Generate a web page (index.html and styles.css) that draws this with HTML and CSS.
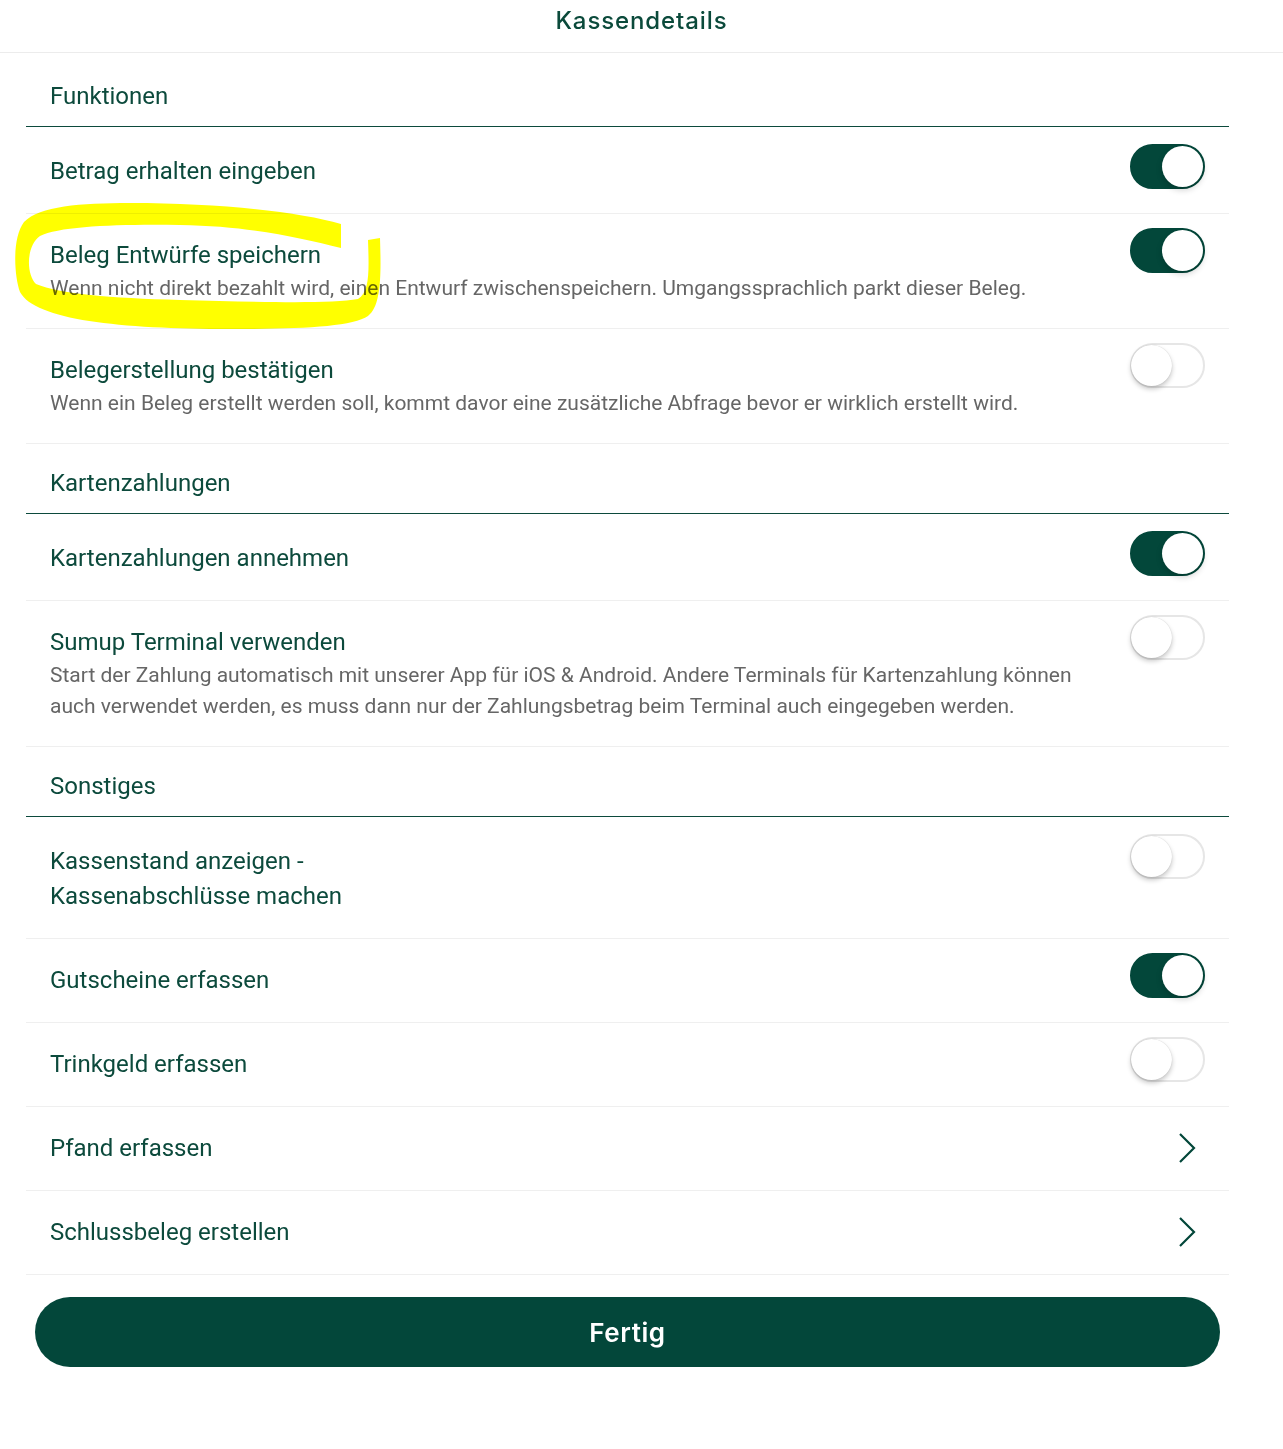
FILE: index.html
```html
<!DOCTYPE html>
<html lang="de">
<head>
<meta charset="utf-8">
<title>Kassendetails</title>
<link rel="stylesheet" href="styles.css">
</head>
<body>
<header class="topbar"><h1 class="topbar-title">Kassendetails</h1></header>
<main class="settings">
  <div class="section-title">Funktionen</div>
  <div class="row">
    <div class="row-text"><div class="row-title">Betrag erhalten eingeben</div></div>
    <span class="toggle on"><span class="knob"></span></span>
  </div>
  <div class="row">
    <div class="row-text">
      <div class="row-title">Beleg Entwürfe speichern</div>
      <div class="row-desc">Wenn nicht direkt bezahlt wird, einen Entwurf zwischenspeichern. Umgangssprachlich parkt dieser Beleg.</div>
    </div>
    <span class="toggle on"><span class="knob"></span></span>
  </div>
  <div class="row">
    <div class="row-text">
      <div class="row-title">Belegerstellung bestätigen</div>
      <div class="row-desc">Wenn ein Beleg erstellt werden soll, kommt davor eine zusätzliche Abfrage bevor er wirklich erstellt wird.</div>
    </div>
    <span class="toggle"><span class="knob"></span></span>
  </div>

  <div class="section-title">Kartenzahlungen</div>
  <div class="row">
    <div class="row-text"><div class="row-title">Kartenzahlungen annehmen</div></div>
    <span class="toggle on"><span class="knob"></span></span>
  </div>
  <div class="row">
    <div class="row-text">
      <div class="row-title">Sumup Terminal verwenden</div>
      <div class="row-desc">Start der Zahlung automatisch mit unserer App für iOS &amp; Android. Andere Terminals für Kartenzahlung können auch verwendet werden, es muss dann nur der Zahlungsbetrag beim Terminal auch eingegeben werden.</div>
    </div>
    <span class="toggle"><span class="knob"></span></span>
  </div>

  <div class="section-title">Sonstiges</div>
  <div class="row">
    <div class="row-text"><div class="row-title">Kassenstand anzeigen -<br>Kassenabschlüsse machen</div></div>
    <span class="toggle"><span class="knob"></span></span>
  </div>
  <div class="row">
    <div class="row-text"><div class="row-title">Gutscheine erfassen</div></div>
    <span class="toggle on"><span class="knob"></span></span>
  </div>
  <div class="row">
    <div class="row-text"><div class="row-title">Trinkgeld erfassen</div></div>
    <span class="toggle"><span class="knob"></span></span>
  </div>
  <div class="row">
    <div class="row-text"><div class="row-title">Pfand erfassen</div></div>
    <svg class="chevron" width="20" height="32" viewBox="0 0 20 32"><path d="M3 2 L17 16 L3 30" fill="none" stroke="#03473a" stroke-width="2.2"/></svg>
  </div>
  <div class="row">
    <div class="row-text"><div class="row-title">Schlussbeleg erstellen</div></div>
    <svg class="chevron" width="20" height="32" viewBox="0 0 20 32"><path d="M3 2 L17 16 L3 30" fill="none" stroke="#03473a" stroke-width="2.2"/></svg>
  </div>

  <button class="done-btn" type="button">Fertig</button>
</main>

<svg class="highlight" width="400" height="140" viewBox="0 195 400 140">
  <path fill="#ffff00" fill-rule="evenodd" d="
    M341 224
    C300 212, 220 203, 130 203
    C80 203, 40 206, 24 222
    C12 238, 14 275, 20 292
    C35 320, 120 329, 230 329
    C300 329, 352 327, 368 316
    C382 306, 381 270, 380 238
    L368 240
    C369 270, 370 292, 358 299
    C330 304, 260 302, 180 300
    C110 298, 60 294, 36 284
    C26 274, 26 246, 40 236
    C60 226, 120 224, 180 225
    C250 226, 300 238, 341 248
    Z"/>
</svg>
</body>
</html>
```

FILE: styles.css
```css
* { box-sizing: border-box; }

body {
  margin: 0;
  background: #ffffff;
  font-family: Roboto, "Liberation Sans", Arial, sans-serif;
  color: #0c4a3c;
  position: relative;
}

.topbar {
  height: 53px;
  border-bottom: 1px solid #ececec;
  display: flex;
  justify-content: center;
}

.topbar-title {
  margin: 0;
  padding-top: 5px;
  font-family: Inter, "Open Sans", sans-serif;
  font-weight: 500;
  font-size: 24px;
  letter-spacing: 0.9px;
  line-height: 32px;
  color: #0b4a3b;
}

.settings {
  width: 1203px;
  margin-left: 26px;
  padding-top: 4px;
  display: flex;
  flex-direction: column;
}

.section-title {
  padding: 22px 24px 12px;
  font-size: 24px;
  line-height: 35px;
  color: #0c4a3c;
  border-bottom: 1px solid #0c4a3c;
}

.row {
  display: flex;
  align-items: flex-start;
  justify-content: space-between;
  gap: 40px;
  padding: 24px 24px 24px 24px;
  border-bottom: 1px solid #efefef;
}

.section-title + .row { padding-top: 27px; }

.row-text { flex: 1; min-width: 0; }

.row-title {
  font-size: 24px;
  line-height: 35px;
  color: #0c4a3c;
}

.row-desc {
  font-size: 21px;
  line-height: 31px;
  color: #666666;
}

.toggle {
  position: relative;
  flex: none;
  width: 75px;
  height: 45px;
  margin-top: -10px;
  border-radius: 23px;
  border: 2px solid #e6e6e6;
  background: #ffffff;
}

.toggle .knob {
  position: absolute;
  top: 0;
  left: -1px;
  width: 41px;
  height: 41px;
  border-radius: 50%;
  background: #ffffff;
  box-shadow: 0 3px 5px rgba(0, 0, 0, 0.22), 0 0 1px rgba(0, 0, 0, 0.2);
}

.toggle.on {
  background: #03473a;
  border-color: #03473a;
}

.toggle.on .knob {
  left: auto;
  right: 0;
  box-shadow: 0 3px 6px rgba(0, 0, 0, 0.18);
}

.chevron {
  flex: none;
  margin-top: 1px;
  margin-right: 8px;
}

.done-btn {
  margin: 22px 9px 0;
  height: 70px;
  border: none;
  border-radius: 35px;
  background: #03473a;
  color: #ffffff;
  font-family: Inter, "Open Sans", sans-serif;
  font-weight: 600;
  font-size: 26px;
  letter-spacing: 0.6px;
  cursor: pointer;
}

.highlight {
  position: absolute;
  left: 0;
  top: 195px;
  mix-blend-mode: multiply;
  pointer-events: none;
}
```
